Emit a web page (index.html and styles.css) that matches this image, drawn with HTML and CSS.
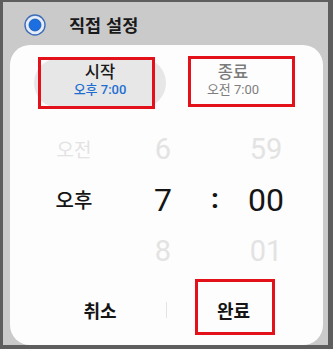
FILE: index.html
```html
<!DOCTYPE html>
<html lang="ko">
<head>
<meta charset="utf-8">
<link rel="stylesheet" href="styles.css">
</head>
<body>
<div class="frame">
  <div class="header">
    <svg class="radio" width="22" height="22" viewBox="0 0 22 22">
      <circle cx="11" cy="11" r="10" fill="#e4ecf8" stroke="#3d6cb8" stroke-width="1.4"/>
      <circle cx="11" cy="11" r="6" fill="#1c6fe0" stroke="#1b56b0" stroke-width="0.8"/>
    </svg>
    <span class="title">직접 설정</span>
  </div>
  <div class="card">
    <div class="tabs">
      <div class="tab tab-active">
        <div class="tab-title">시작</div>
        <div class="tab-time">오후 7:00</div>
      </div>
      <div class="tab">
        <div class="tab-title">종료</div>
        <div class="tab-time">오전 7:00</div>
      </div>
    </div>
    <div class="picker">
      <div class="cell ko faded">오전</div>
      <div class="cell num faded">6</div>
      <div class="cell"></div>
      <div class="cell num faded">59</div>
      <div class="cell ko current">오후</div>
      <div class="cell num current">7</div>
      <div class="cell colon">:</div>
      <div class="cell num current">00</div>
      <div class="cell"></div>
      <div class="cell num faded">8</div>
      <div class="cell"></div>
      <div class="cell num faded">01</div>
    </div>
    <div class="actions">
      <div class="action">취소</div>
      <div class="divider"></div>
      <div class="action">완료</div>
    </div>
    <div class="mark mark-start"></div>
    <div class="mark mark-end"></div>
    <div class="mark mark-done"></div>
  </div>
</div>
</body>
</html>
```
FILE: styles.css
```css
* { box-sizing: border-box; }
html, body {
  margin: 0;
  padding: 0;
}
body {
  width: 333px;
  height: 349px;
  background: #5e5e5e;
  overflow: hidden;
  font-family: "Noto Sans CJK KR", "Noto Sans", sans-serif;
  padding: 2px 5px 4px 3px;
}
.frame {
  height: 343px;
  background: #cacaca;
  padding: 0 5px 0 7px;
  display: flex;
  flex-direction: column;
}
.header {
  height: 43px;
  display: flex;
  align-items: center;
  padding-left: 14px;
  padding-top: 3px;
}
.radio { display: block; }
.title {
  margin-left: 23px;
  font-size: 17.5px;
  font-weight: 700;
  color: #1a1a1a;
  line-height: 22px;
}
.card {
  position: relative;
  height: 300px;
  background: #fdfdfd;
  border-radius: 20px;
  padding: 13px 23px 0 24px;
}
.tabs {
  display: grid;
  grid-template-columns: 132px 134px;
  height: 50px;
}
.tab {
  text-align: center;
  padding-top: 3px;
}
.tab-active {
  background: #e7e7e7;
  border-radius: 25px;
}
.tab-title {
  font-size: 16.5px;
  font-weight: 500;
  line-height: 20px;
  color: #7a7a7a;
}
.tab-active .tab-title { color: #1a1a1a; }
.tab-time {
  font-family: "Roboto", "Noto Sans CJK KR", sans-serif;
  font-size: 13px;
  line-height: 18px;
  color: #7e7e7e;
}
.tab-active .tab-time { color: #1f6fd1; font-weight: 500; }
.picker {
  margin-top: 15px;
  display: grid;
  grid-template-columns: 80px 98px 6px 96px;
  grid-template-rows: repeat(3, 51px);
}
.cell {
  display: flex;
  align-items: center;
  justify-content: center;
}
.ko {
  font-size: 20px;
  font-family: "Noto Sans CJK KR", sans-serif;
}
.num {
  font-family: "Roboto", sans-serif;
}
.faded { color: #e3e3e3; }
.num.faded { font-size: 29px; }
.ko.faded { font-size: 19px; }
.current { color: #151515; }
.ko.current { font-weight: 500; }
.num.current { font-size: 32px; }
.colon {
  font-family: "Roboto", sans-serif;
  font-size: 28px;
  font-weight: 700;
  color: #151515;
  padding-bottom: 3px;
}
.actions {
  height: 68px;
  display: grid;
  grid-template-columns: 132px 1px 133px;
  align-items: center;
}
.action {
  text-align: center;
  font-size: 18px;
  font-weight: 700;
  color: #151515;
  line-height: 24px;
}
.divider {
  height: 16px;
  background: #e4e4e4;
}
.mark {
  position: absolute;
  border: 3px solid #e3121a;
}
.mark-start { left: 28px; top: 12px; width: 117px; height: 52px; }
.mark-end { left: 178px; top: 11px; width: 107px; height: 51px; }
.mark-done { left: 185px; top: 234px; width: 80px; height: 56px; }
```
